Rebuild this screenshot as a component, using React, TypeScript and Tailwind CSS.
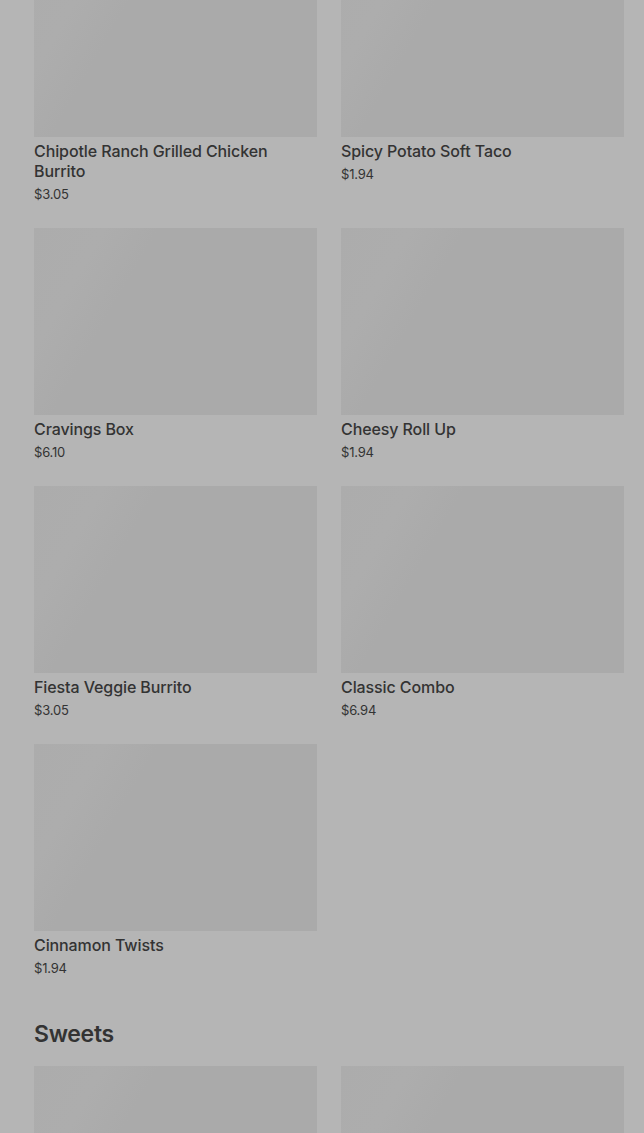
import React from "react";

type Item = { name: string; price: string };

const items: Item[] = [
  { name: "Chipotle Ranch Grilled Chicken Burrito", price: "$3.05" },
  { name: "Spicy Potato Soft Taco", price: "$1.94" },
  { name: "Cravings Box", price: "$6.10" },
  { name: "Cheesy Roll Up", price: "$1.94" },
  { name: "Fiesta Veggie Burrito", price: "$3.05" },
  { name: "Classic Combo", price: "$6.94" },
  { name: "Cinnamon Twists", price: "$1.94" },
];

function Placeholder() {
  return (
    <div className="h-[187px] w-full bg-[#aaaaaa] bg-[linear-gradient(120deg,#acacac_0%,#adadad_18%,#aaaaaa_32%,#aaaaaa_100%)]" />
  );
}

function Card({ item }: { item: Item }) {
  return (
    <div className="flex flex-col">
      <Placeholder />
      <div className="mt-1 pr-6 text-[16px] leading-[20px] font-medium tracking-[-0.1px] text-[#333333]">
        {item.name}
      </div>
      <div className="mt-[5px] text-[13px] leading-[16px] tracking-[-0.2px] text-[#333333]">
        {item.price}
      </div>
    </div>
  );
}

export default function App() {
  return (
    <div
      className="min-h-[1133px] h-[1133px] overflow-hidden bg-[#b5b5b5] pl-[34px] pr-[20px]"
      style={{ fontFamily: "Inter, 'Noto Sans', sans-serif" }}
    >
      <div className="-mt-[50px] grid grid-cols-2 gap-x-6 gap-y-[26px]">
        {items.map((it) => (
          <Card key={it.name} item={it} />
        ))}
      </div>
      <h2 className="mt-[42px] text-[23px] leading-[32px] font-semibold tracking-[-0.3px] text-[#333333]">
        Sweets
      </h2>
      <div className="mt-4 grid grid-cols-2 gap-x-6">
        <Placeholder />
        <Placeholder />
      </div>
    </div>
  );
}
